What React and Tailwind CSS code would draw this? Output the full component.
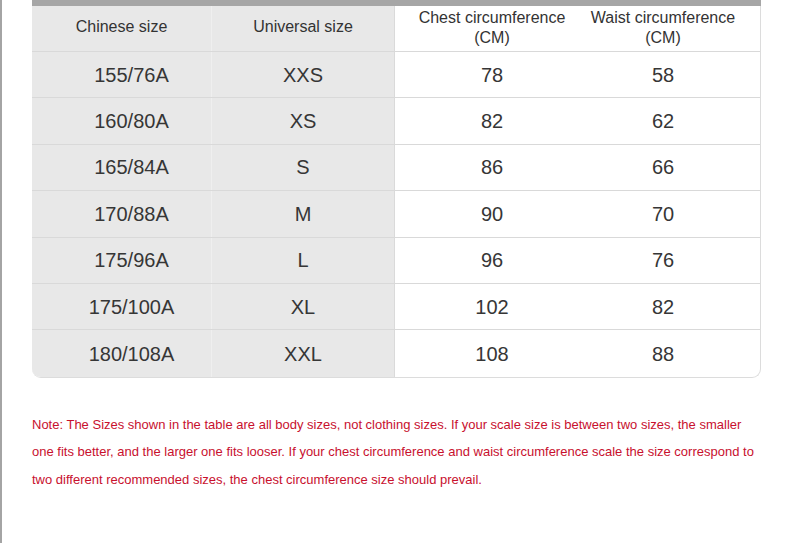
import React from 'react';

// --- size chart data ---
const ROWS = [
  ['155/76A', 'XXS', '78', '58'],
  ['160/80A', 'XS', '82', '62'],
  ['165/84A', 'S', '86', '66'],
  ['170/88A', 'M', '90', '70'],
  ['175/96A', 'L', '96', '76'],
  ['175/100A', 'XL', '102', '82'],
  ['180/108A', 'XXL', '108', '88'],
];

const App = () => {
  return (
    <div className="w-[790px] h-[543px] bg-white border-l-2 border-[#a4a4a4] pl-[30px] font-['Liberation_Sans',Arial,sans-serif] text-[#333]">
      <div className="w-[729px]">
        {/* top grey strip */}
        <div className="h-[6px] bg-[#a6a6a6]" />

        <div className="rounded-b-[9px] border-r border-b border-[#dcdcdc] overflow-hidden">
          {/* header */}
          <div className="grid grid-cols-[180px_183px_194px_172px] h-[46px] border-b border-[#d9d9d9] text-[16px]">
            <div className="bg-[#e8e8e8] border-r border-[#efefef] flex items-center justify-center pb-[4px]">Chinese size</div>
            <div className="bg-[#e8e8e8] border-r border-[#dadada] flex items-center justify-center pb-[4px]">Universal size</div>
            <div className="flex flex-col items-center justify-center leading-[20px] pb-[2px]">
              <span>Chest circumference</span>
              <span>(CM)</span>
            </div>
            <div className="flex flex-col items-center justify-center leading-[20px] pb-[2px] pr-[24px]">
              <span>Waist circumference</span>
              <span>(CM)</span>
            </div>
          </div>

          {/* body rows */}
          {ROWS.map((r, i) => (
            <div
              key={r[0]}
              className={`grid grid-cols-[180px_183px_194px_172px] h-[46.4px] text-[20px] text-[#363636] ${i < ROWS.length - 1 ? 'border-b border-[#d9d9d9]' : ''}`}
            >
              <div className="bg-[#e8e8e8] border-r border-[#efefef] flex items-center justify-center pl-[20px]">{r[0]}</div>
              <div className="bg-[#e8e8e8] border-r border-[#dadada] flex items-center justify-center">{r[1]}</div>
              <div className="flex items-center justify-center">{r[2]}</div>
              <div className="flex items-center justify-center pr-[24px]">{r[3]}</div>
            </div>
          ))}
        </div>

        {/* note */}
        <p className="mt-[33px] text-[13px] leading-[27.5px] text-[#c8102e]">
          Note: The Sizes shown in the table are all body sizes, not clothing sizes. If your scale size is between two sizes, the smaller one fits better, and the larger one fits looser. If your chest circumference and waist circumference scale the size correspond to two different recommended sizes, the chest circumference size should prevail.
        </p>
      </div>
    </div>
  );
};

export default App;
